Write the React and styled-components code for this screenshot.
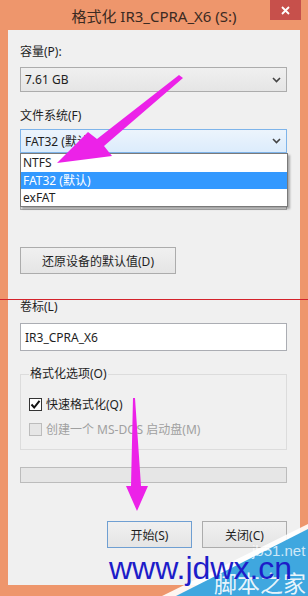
import React from 'react';
import styled, { createGlobalStyle } from 'styled-components';

const GlobalStyle = createGlobalStyle`
  html, body {
    margin: 0;
    padding: 0;
  }
  body {
    background: #ee966c;
    font-family: "Noto Sans", "Noto Sans CJK SC", sans-serif;
  }
  * {
    box-sizing: border-box;
  }
`;

const Window = styled.div`
  position: relative;
  width: 308px;
  height: 596px;
  overflow: hidden;
  background: #ee966c;
  display: flex;
  flex-direction: column;
`;

const TitleBar = styled.div`
  height: 30px;
  display: grid;
  grid-template-columns: 38px 1fr 38px;
  align-items: start;
`;

const Title = styled.div`
  padding-top: 2px;
  line-height: 28px;
  text-align: center;
  font-size: 15px;
  color: #3b2a22;
  white-space: nowrap;
`;

const CloseButton = styled.div`
  width: 31px;
  height: 20px;
  background: #c7504b;
  display: flex;
  align-items: center;
  justify-content: center;
`;

const Client = styled.div`
  flex: 1;
  margin: 0 8px 11px 8px;
  background: #f0f0f0;
  padding: 14px 13px 0 12px;
  display: flex;
  flex-direction: column;
  font-size: 12px;
  color: #1e1e1e;
`;

const Label = styled.div`
  margin-top: ${p => p.$top || 0}px;
  height: 16px;
  line-height: 16px;
  white-space: nowrap;
`;

const ComboWrap = styled.div`
  position: relative;
  margin-top: ${p => p.$top || 0}px;
`;

const Combo = styled.div`
  margin-top: ${p => p.$top || 0}px;
  height: ${p => p.$h || 25}px;
  border: 1px solid ${p => (p.$focused ? '#7eb4ea' : '#acacac')};
  background: ${p =>
    p.$focused
      ? 'linear-gradient(#ecf4fc, #dcecfc)'
      : 'linear-gradient(#f0f0f0, #e5e5e5)'};
  display: flex;
  align-items: center;
  justify-content: space-between;
  padding: 0 5px 0 4px;
`;

const DropList = styled.div`
  position: absolute;
  top: 100%;
  left: 0;
  width: 268px;
  background: #fff;
  border: 1px solid #7a7a7a;
  box-shadow: 2px 2px 2px rgba(0, 0, 0, 0.3);
  display: flex;
  flex-direction: column;
  z-index: 2;
`;

const DropItem = styled.div`
  height: ${p => p.$h || 17}px;
  line-height: ${p => p.$h || 17}px;
  padding-left: 2px;
  background: ${p => (p.$selected ? '#3399ff' : 'transparent')};
  color: ${p => (p.$selected ? '#fff' : '#1e1e1e')};
`;

const Button = styled.div`
  width: ${p => p.$w}px;
  height: 27px;
  margin-top: ${p => p.$top || 0}px;
  border: 1px solid ${p => (p.$primary ? '#6f9fd2' : '#acacac')};
  background: linear-gradient(#f0f0f0, #e5e5e5);
  display: flex;
  align-items: center;
  justify-content: center;
  white-space: nowrap;
`;

const TextBox = styled.div`
  margin-top: ${p => p.$top || 0}px;
  height: 28px;
  border: 1px solid #abadb3;
  background: #fff;
  display: flex;
  align-items: center;
  padding-left: 4px;
`;

const Group = styled.fieldset`
  margin: 15px 0 0 0;
  padding: 0 8px 12px 8px;
  border: 1px solid #dcdcdc;
  display: flex;
  flex-direction: column;
`;

const Legend = styled.legend`
  padding: 0 1px;
  height: 16px;
  line-height: 16px;
`;

const CheckRow = styled.div`
  margin-top: ${p => p.$top || 0}px;
  height: 16px;
  display: flex;
  align-items: center;
  gap: 4px;
  color: ${p => (p.$disabled ? '#a0a0a0' : '#1e1e1e')};
  white-space: nowrap;
`;

const CheckBox = styled.div`
  width: 13px;
  height: 13px;
  border: 1px solid ${p => (p.$disabled ? '#bcbcbc' : '#333')};
  background: ${p => (p.$disabled ? '#e6e6e6' : '#fff')};
  display: flex;
  align-items: center;
  justify-content: center;
`;

const Progress = styled.div`
  margin-top: 17px;
  height: 16px;
  border: 1px solid #bcbcbc;
  background: #e6e6e6;
`;

const ButtonRow = styled.div`
  margin-top: 38px;
  display: flex;
  justify-content: flex-end;
  gap: 10px;
`;

const Overlay = styled.svg`
  position: absolute;
  left: 0;
  top: 0;
  pointer-events: none;
  z-index: 3;
`;

const MarkUrl = styled.div`
  position: absolute;
  left: 109px;
  top: 548px;
  font-family: "Liberation Sans", Arial, sans-serif;
  font-size: 32px;
  line-height: 40px;
  color: #1d1dc9;
  z-index: 5;
  white-space: nowrap;
`;

const MarkSite = styled.div`
  position: absolute;
  left: 252px;
  top: 542px;
  font-family: "Liberation Sans", Arial, sans-serif;
  font-size: 15px;
  line-height: 18px;
  color: rgba(255, 255, 255, 0.75);
  z-index: 4;
  white-space: nowrap;
`;

const MarkName = styled.div`
  position: absolute;
  left: 214px;
  top: 568px;
  font-family: "Noto Sans CJK SC", sans-serif;
  font-size: 23px;
  line-height: 28px;
  color: rgba(255, 255, 255, 0.9);
  z-index: 4;
  white-space: nowrap;
`;

const Chevron = () => (
  <svg width="9" height="6" viewBox="0 0 9 6">
    <polyline points="1,1 4.5,4.5 8,1" fill="none" stroke="#444" strokeWidth="1.6" />
  </svg>
);

const Check = () => (
  <svg width="11" height="11" viewBox="0 0 11 11">
    <polyline points="1.5,5.5 4.2,8.5 9.5,1.8" fill="none" stroke="#111" strokeWidth="2" />
  </svg>
);

function App() {
  return (
    <Window>
      <GlobalStyle />
      <TitleBar>
        <span />
        <Title>格式化 IR3_CPRA_X6 (S:)</Title>
        <CloseButton>
          <svg width="9" height="9" viewBox="0 0 9 9">
            <path d="M1 1 L8 8 M8 1 L1 8" stroke="#fff" strokeWidth="1.8" />
          </svg>
        </CloseButton>
      </TitleBar>

      <Client>
        <Label>容量(P):</Label>
        <Combo $top={7}>
          <span>7.61 GB</span>
          <Chevron />
        </Combo>

        <Label $top={16}>文件系统(F)</Label>
        <ComboWrap $top={5}>
          <Combo $h={24} $focused>
            <span>FAT32 (默认)</span>
            <Chevron />
          </Combo>
          <DropList>
            <DropItem $h={18}>NTFS</DropItem>
            <DropItem $selected>FAT32 (默认)</DropItem>
            <DropItem>exFAT</DropItem>
          </DropList>
        </ComboWrap>

        {/* allocation unit row, hidden under the open list */}
        <Label $top={8} />
        <Combo $top={8} />

        <Button $w={156} $top={37}>还原设备的默认值(D)</Button>

        <Label $top={25}>卷标(L)</Label>
        <TextBox $top={8}>IR3_CPRA_X6</TextBox>

        <Group>
          <Legend>格式化选项(O)</Legend>
          <CheckRow $top={14}>
            <CheckBox>
              <Check />
            </CheckBox>
            快速格式化(Q)
          </CheckRow>
          <CheckRow $top={9} $disabled>
            <CheckBox $disabled />
            创建一个 MS-DOS 启动盘(M)
          </CheckRow>
        </Group>

        <Progress />

        <ButtonRow>
          <Button $w={85} $primary>开始(S)</Button>
          <Button $w={85}>关闭(C)</Button>
        </ButtonRow>
      </Client>

      <Overlay width="308" height="596" viewBox="0 0 308 596">
        <rect x="0" y="299" width="308" height="1" fill="#d4232b" />
        <polygon
          points="179,75 183,78 104,146 112,156 57,163 88,132 97,139"
          fill="#ec22e8"
        />
        <polygon
          points="133,398 135,398 141,486 148,486 137,511 126,486 131,486"
          fill="#ec22e8"
        />
        <polygon points="162,596 308,524 308,596" fill="#ffffff" opacity="0.9" />
        <polygon points="176,596 308,529 308,596" fill="#3fa7df" />
      </Overlay>
      <MarkSite>jb51.net</MarkSite>
      <MarkName>脚本之家</MarkName>
      <MarkUrl>www.jdwx.cn</MarkUrl>
    </Window>
  );
}

export default App;
